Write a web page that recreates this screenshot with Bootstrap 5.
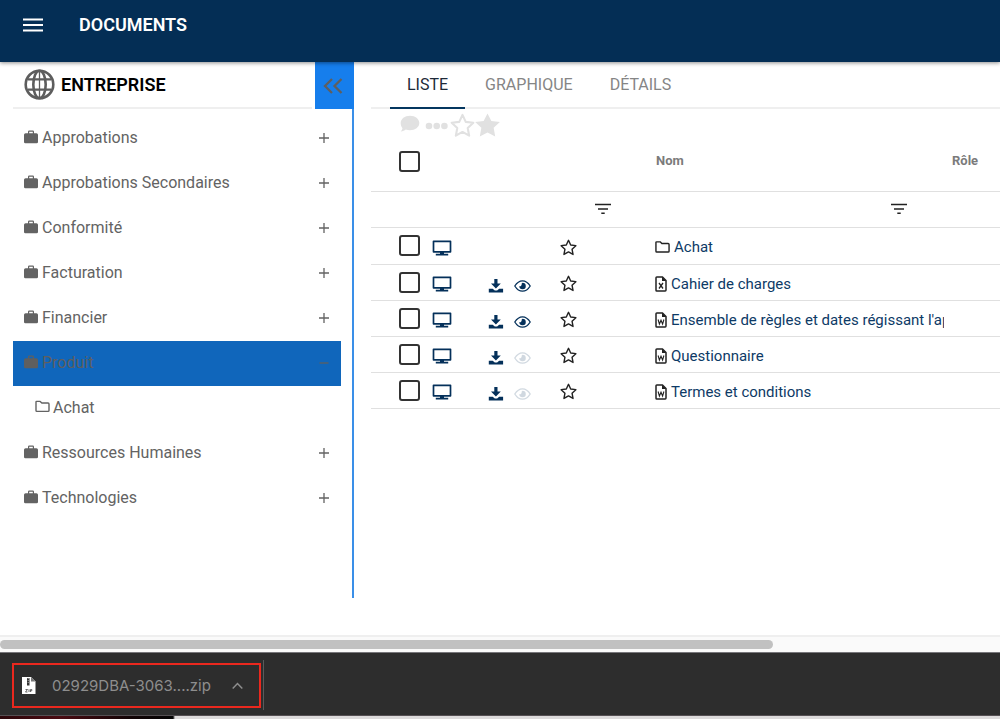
<!DOCTYPE html>
<html lang="fr">
<head>
<meta charset="utf-8">
<meta name="viewport" content="width=device-width, initial-scale=1">
<title>Documents</title>
<link href="https://cdn.jsdelivr.net/npm/bootstrap@5.3.0/dist/css/bootstrap.min.css" rel="stylesheet">
<style>
body{font-family:Roboto,"Liberation Sans",sans-serif;font-size:16px;line-height:24px;color:#5f5f5f;background:#fff;overflow-x:hidden}
svg{display:block;flex:none}
button.plain{background:none;border:0;padding:0;color:inherit}
.topbar{height:62px;background:#042e55;color:#fff;padding:13px 22px;box-shadow:0 1px 4px rgba(0,0,0,.45);z-index:2}
.topbar h1{font-size:18px;line-height:24px;font-weight:600;margin:0 0 0 35px}
.side{width:354px;margin-bottom:37px}
.side-title{height:47px;margin-left:13px;margin-right:3px;border-bottom:2px solid #efefef;padding-left:11px}
.side-title h2{font-size:18px;line-height:24px;font-weight:600;color:#000;margin:0 0 0 6px}
.collapse-btn{width:39px;height:47px;padding-right:3px!important;background:#167eec!important}
.tree{border-right:2px solid #3a8fe8;padding:7px 11px 0 13px}
.tree a{height:45px;padding:0 11px 2px;color:#636363;text-decoration:none;gap:4px}
.tree a>svg:first-child{margin-bottom:2px}
.tree a.chosen{background:#1066bb;color:#5f5f5f}
.tree a.child{padding-left:22px;gap:3px}
.content{min-width:0;margin-left:17px}
.tabs{height:47px;border-bottom:2px solid #efefef;padding-left:19px;gap:3px}
.tabs button{height:47px;padding:0 17px!important;color:#858585;border-bottom:2px solid transparent!important}
.tabs button.chosen{color:#1d2a38;border-bottom-color:#04365f!important}
.tools{height:30px;padding:3px 0 0 28px;color:#e1e1e1}
.docs{table-layout:fixed;width:100%;font-size:15px;line-height:20px;margin:0}
.docs th,.docs td{padding:0;border-bottom:1px solid #e0e0e0;height:36px;vertical-align:middle}
.docs thead tr:first-child th{height:52px;vertical-align:top;padding-top:12px;font-size:13px;font-weight:700;color:#7b7b7b}
.docs tbody tr:first-child td{height:37px}
.docs .pick{padding-left:28px}
.docs .name{padding-left:7px;overflow:hidden;white-space:nowrap}
.docs thead tr:first-child .name{padding-left:8px}
.docs .name a{color:#0d3a66;text-decoration:none;padding-top:3px}
.docs .pick input{appearance:none;display:block;width:21px;height:21px;margin:0;border:2px solid #333;border-radius:3px;background:#fff}
.docs button{display:block;color:#04305a}
.docs .act{padding:4px 0 0 7px}
.docs .files{padding:7px 0 0 7px}
.docs .fav{padding:3px 0 0 9px}
.ink{color:#222!important}
.faded{opacity:.18}
.scroller{height:17px;background:#fafafa;border-top:2px solid #efefef;padding-top:3px}
.scroller div{width:77.3%;height:9px;border-radius:5px;background:#c1c1c1}
.shelf{height:63px;background:#2d2d2d;border-top:1px solid #77767a;padding:7px 12px}
.shelf .item{width:249px;height:45px;border:2px solid #ea281e;padding:0 16px 0 8px;color:#8e8e8e;font:15px/20px Inter,"Liberation Sans",sans-serif;margin-top:3px}
.shelf .rule{width:1px;height:50px;background:#5a5a5a;margin-left:2px}
.desk{height:4px;background:linear-gradient(90deg,#2c070b,#4a0b12 60px,#120406 130px,#050505 173px,#dcdada 175px);border-top:1px solid #555053}
</style>
</head>
<body class="d-flex flex-column min-vh-100">
<svg width="0" height="0" class="position-absolute" aria-hidden="true">
<symbol id="case" viewBox="0 0 14 14"><path fill="currentColor" d="M1.600 3.200H4V1.800Q4 .6 5.200.6h3.600Q10 .6 10 1.800V3.200h2.400Q14 3.200 14 4.700V12q0 1.300-1.400 1.300H1.400Q0 13.300 0 12V4.700Q0 3.200 1.600 3.200ZM5.200 3.200h3.600V1.800H5.200Z"/></symbol>
<symbol id="plus" viewBox="0 0 12 12"><path stroke="currentColor" stroke-width="1.300" d="M1 6h10M6 1v10"/></symbol>
<symbol id="folder" viewBox="0 0 16 14"><path fill="none" stroke="currentColor" stroke-width="1.500" stroke-linejoin="round" d="M1 2.200Q1 1.500 1.700 1.500H5.500L7.300 3.300H14Q15 3.300 15 4.200V11.400Q15 12.300 14 12.300H1.900Q1 12.300 1 11.400Z"/></symbol>
<symbol id="star" viewBox="0 0 24 24"><path fill="none" stroke="currentColor" stroke-width="2" stroke-linejoin="round" d="m12 1.800 3.100 6.700 7.300.900-5.400 5 1.400 7.400L12 18.200l-6.400 3.600L7 14.400l-5.400-5 7.300-.900Z"/></symbol>
<symbol id="screen" viewBox="0 0 20 16"><path fill="none" stroke="currentColor" stroke-width="1.700" stroke-linejoin="round" d="M1.500 1.300h17v10.500h-17Z"/><path fill="currentColor" d="M8 12h4v1.800h4.200v1.600H3.800v-1.600H8Z"/></symbol>
<symbol id="down" viewBox="0 0 16 14"><path fill="currentColor" d="M6.300 0h3.200v4.500h3.300L7.900 9.500 3 4.500h3.300ZM.8 9.800h3.900l2.100 1.700h2.300l2.100-1.700h3.900v3.700H.8Z"/></symbol>
<symbol id="eye" viewBox="0 0 17 12"><path fill="none" stroke="currentColor" stroke-width="1.300" d="M.8 6Q4 .8 8.500.8T16.200 6Q13 11.200 8.500 11.200T.8 6Z"/><path fill="currentColor" d="M8.500 2.700a3.300 3.300 0 1 1-3.300 3.600Q7.900 6.600 7.700 3.500Z"/></symbol>
<symbol id="sheet" viewBox="0 0 12 16"><path fill="none" stroke="currentColor" stroke-width="1.500" stroke-linejoin="round" d="M1 1.800Q1 1 1.800 1H7.500L11 4.500V14q0 1-.8 1H1.800Q1 15 1 14.200Z"/><path fill="currentColor" d="M7 .8v4.200h4.200Z"/></symbol>
<symbol id="sheetx" viewBox="0 0 12 16"><use href="#sheet"/><path fill="none" stroke="currentColor" stroke-width="1.300" d="m4 7 4 5.500M8 7l-4 5.500"/></symbol>
<symbol id="sheetw" viewBox="0 0 12 16"><use href="#sheet"/><path fill="none" stroke="currentColor" stroke-width="1.100" d="m3.100 7.500 1.300 4.500L6 8.200 7.600 12l1.300-4.500"/></symbol>
<symbol id="filter" viewBox="0 0 16 12"><path stroke="currentColor" stroke-width="1.500" d="M0 1.500h16M3 6h10M6.300 10.300h3.400"/></symbol>
</svg>

<header class="topbar d-flex align-items-start position-relative">
<button class="plain" aria-label="Menu"><svg width="22" height="24" viewBox="0 0 22 24"><path stroke="#fff" stroke-width="2" d="M1 6.500h20M1 12h20M1 17.500h20"/></svg></button>
<h1>DOCUMENTS</h1>
</header>

<main class="d-flex flex-grow-1">
<aside class="side d-flex flex-column flex-shrink-0">
<div class="d-flex">
<div class="side-title d-flex align-items-center flex-grow-1">
<svg width="31" height="31" viewBox="0 0 31 31" fill="none" stroke="#5d5d5d" stroke-width="2.600"><circle cx="15.500" cy="15.500" r="13.800"/><ellipse cx="15.500" cy="15.500" rx="6.200" ry="13.800"/><path d="M15.500 1.500v28" stroke-width="1.300"/><path d="M4 10.300h23M4 20.700h23" stroke-width="2.200"/></svg>
<h2>ENTREPRISE</h2>
</div>
<button class="plain collapse-btn d-flex align-items-center justify-content-center" aria-label="Réduire"><svg width="20" height="16" viewBox="0 0 20 16"><path fill="none" stroke="#5f5f5f" stroke-width="2.300" d="M9 1 2 8l7 7M18.500 1l-7 7 7 7"/></svg></button>
</div>
<nav class="tree flex-grow-1">
<a href="#" class="d-flex align-items-center"><svg width="14" height="14"><use href="#case"/></svg><span class="flex-grow-1">Approbations</span><svg width="12" height="12"><use href="#plus"/></svg></a>
<a href="#" class="d-flex align-items-center"><svg width="14" height="14"><use href="#case"/></svg><span class="flex-grow-1">Approbations Secondaires</span><svg width="12" height="12"><use href="#plus"/></svg></a>
<a href="#" class="d-flex align-items-center"><svg width="14" height="14"><use href="#case"/></svg><span class="flex-grow-1">Conformité</span><svg width="12" height="12"><use href="#plus"/></svg></a>
<a href="#" class="d-flex align-items-center"><svg width="14" height="14"><use href="#case"/></svg><span class="flex-grow-1">Facturation</span><svg width="12" height="12"><use href="#plus"/></svg></a>
<a href="#" class="d-flex align-items-center"><svg width="14" height="14"><use href="#case"/></svg><span class="flex-grow-1">Financier</span><svg width="12" height="12"><use href="#plus"/></svg></a>
<a href="#" class="chosen d-flex align-items-center"><svg width="14" height="14"><use href="#case"/></svg><span class="flex-grow-1">Produit</span><svg width="12" height="12" viewBox="0 0 12 12"><path stroke="currentColor" stroke-width="1.300" d="M1.500 6h9"/></svg></a>
<a href="#" class="child d-flex align-items-center"><svg width="15" height="13"><use href="#folder"/></svg><span>Achat</span></a>
<a href="#" class="d-flex align-items-center"><svg width="14" height="14"><use href="#case"/></svg><span class="flex-grow-1">Ressources Humaines</span><svg width="12" height="12"><use href="#plus"/></svg></a>
<a href="#" class="d-flex align-items-center"><svg width="14" height="14"><use href="#case"/></svg><span class="flex-grow-1">Technologies</span><svg width="12" height="12"><use href="#plus"/></svg></a>
</nav>
</aside>

<section class="content flex-grow-1">
<div class="tabs d-flex">
<button class="plain chosen">LISTE</button><button class="plain">GRAPHIQUE</button><button class="plain">DÉTAILS</button>
</div>
<div class="tools d-flex">
<button class="plain" aria-label="Commenter"><svg width="24" height="24" viewBox="0 0 24 24"><path fill="currentColor" d="M11 1.800c5.200 0 9.300 3.100 9.300 7.300s-4.100 7.200-9.300 7.200c-1.500 0-2.900-.2-4.200-.7-1.200 1-3 1.900-5 2 .8-1 1.500-2.200 1.700-3.400C2.200 12.900 1.700 11.100 1.700 9.100 1.700 4.900 5.800 1.800 11 1.800Z"/></svg></button>
<button class="plain" aria-label="Plus d'options"><svg width="27" height="24" viewBox="0 0 27 24"><g fill="currentColor"><circle cx="6" cy="12" r="3.300"/><circle cx="13.700" cy="12" r="3.300"/><circle cx="21.400" cy="12" r="3.300"/></g></svg></button>
<button class="plain" aria-label="Ajouter aux favoris"><svg width="25" height="25"><use href="#star"/></svg></button>
<button class="plain" aria-label="Favoris"><svg width="25" height="25" viewBox="0 0 24 24"><path fill="currentColor" d="m12 .5 3.700 7.200 8.200 1-6 5.500 1.500 8.300-7.400-3.900-7.400 3.900 1.500-8.300-6-5.500 8.200-1Z"/></svg></button>
</div>
<table class="docs">
<colgroup><col style="width:54px"><col style="width:56px"><col style="width:70px"><col style="width:44px"><col style="width:53px"><col style="width:243px"><col style="width:53px"><col></colgroup>
<thead>
<tr><th class="pick"><input type="checkbox" aria-label="Tout sélectionner"></th><th colspan="4"></th><th class="name" colspan="2">Nom</th><th class="name">Rôle</th></tr>
<tr><td colspan="4"></td><td colspan="2"><button class="plain ink" aria-label="Filtrer par nom"><svg width="16" height="12"><use href="#filter"/></svg></button></td><td colspan="2"><button class="plain ink" aria-label="Filtrer par rôle"><svg width="16" height="12"><use href="#filter"/></svg></button></td></tr>
</thead>
<tbody id="rows"></tbody>
</table>
</section>
</main>

<div class="scroller"><div></div></div>
<footer class="shelf d-flex">
<button class="item bg-transparent d-flex align-items-center">
<svg width="14" height="18" viewBox="0 0 14 18"><path fill="#fff" d="M0 0h9l4.500 4.500V17H0Z"/><path fill="#777" d="M9 0v4.500h4.500Z"/><path fill="#333" d="M5 1h2.500v7.500H5Z"/><path stroke="#aaa" stroke-dasharray="1 1" d="M6.200 1v6"/><path fill="none" stroke="#444" stroke-width=".8" d="M3.500 12.500h2l-2 2.500h2M7 12.300V15M8.500 15v-2.500h1.300v1.300H8.500"/></svg>
<span class="flex-grow-1 text-start ps-3">02929DBA-3063....zip</span>
<svg width="11" height="8" viewBox="0 0 11 8"><path fill="none" stroke="#8e8e8e" stroke-width="1.500" d="m.7 6.500 4.800-5 4.800 5"/></svg>
</button>
<div class="rule"></div>
</footer>
<div class="desk"></div>

<script>
const docs = [
  ["Achat", "folder", 0],
  ["Cahier de charges", "sheetx", 2],
  ["Ensemble de règles et dates régissant l'app", "sheetw", 2],
  ["Questionnaire", "sheetw", 1],
  ["Termes et conditions", "sheetw", 1]
];
const icon = (id, w, h) => `<svg width="${w}" height="${h}"><use href="#${id}"/></svg>`;
document.getElementById("rows").innerHTML = docs.map(([name, kind, files]) => `<tr>
<td class="pick"><input type="checkbox" aria-label="Sélectionner ${name}"></td>
<td class="act"><button class="plain" aria-label="Ouvrir">${icon("screen", 20, 16)}</button></td>
<td class="files">${files ? `<div class="d-flex align-items-center" style="gap:10px"><button class="plain" aria-label="Télécharger">${icon("down", 16, 14)}</button><button class="plain ${files < 2 ? "faded" : ""}" aria-label="Aperçu">${icon("eye", 17, 12)}</button></div>` : ""}</td>
<td class="fav"><button class="plain ink" aria-label="Favori">${icon("star", 17, 17)}</button></td>
<td></td>
<td class="name" colspan="2"><a href="#" class="d-flex align-items-center gap-1"><span class="ink">${kind === "folder" ? icon(kind, 15, 14) : icon(kind, 12, 16)}</span><span>${name}</span></a></td>
<td></td></tr>`).join("");
</script>
<script src="https://cdn.jsdelivr.net/npm/bootstrap@5.3.0/dist/js/bootstrap.bundle.min.js"></script>
</body>
</html>
